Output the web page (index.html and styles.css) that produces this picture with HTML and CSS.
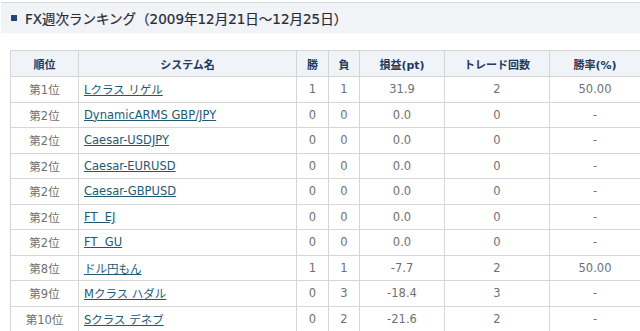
FILE: index.html
```html
<!DOCTYPE html>
<html lang="ja">
<head>
<meta charset="utf-8">
<link rel="stylesheet" href="styles.css">
</head>
<body>
<div class="page">
  <h2 class="title"><span class="sq"></span>FX週次ランキング（2009年12月21日～12月25日）</h2>
  <table class="rank">
    <colgroup>
      <col class="c1"><col class="c2"><col class="c3"><col class="c4"><col class="c5"><col class="c6"><col class="c7">
    </colgroup>
    <thead>
      <tr><th>順位</th><th>システム名</th><th>勝</th><th>負</th><th>損益(pt)</th><th>トレード回数</th><th>勝率(%)</th></tr>
    </thead>
    <tbody>
      <tr><td>第1位</td><td class="name"><a href="#">Lクラス リゲル</a></td><td>1</td><td>1</td><td>31.9</td><td>2</td><td>50.00</td></tr>
      <tr><td>第2位</td><td class="name"><a href="#">DynamicARMS GBP/JPY</a></td><td>0</td><td>0</td><td>0.0</td><td>0</td><td>-</td></tr>
      <tr><td>第2位</td><td class="name"><a href="#">Caesar-USDJPY</a></td><td>0</td><td>0</td><td>0.0</td><td>0</td><td>-</td></tr>
      <tr><td>第2位</td><td class="name"><a href="#">Caesar-EURUSD</a></td><td>0</td><td>0</td><td>0.0</td><td>0</td><td>-</td></tr>
      <tr><td>第2位</td><td class="name"><a href="#">Caesar-GBPUSD</a></td><td>0</td><td>0</td><td>0.0</td><td>0</td><td>-</td></tr>
      <tr><td>第2位</td><td class="name"><a href="#">FT&nbsp; EJ</a></td><td>0</td><td>0</td><td>0.0</td><td>0</td><td>-</td></tr>
      <tr><td>第2位</td><td class="name"><a href="#">FT&nbsp; GU</a></td><td>0</td><td>0</td><td>0.0</td><td>0</td><td>-</td></tr>
      <tr><td>第8位</td><td class="name"><a href="#">ドル円もん</a></td><td>1</td><td>1</td><td>-7.7</td><td>2</td><td>50.00</td></tr>
      <tr><td>第9位</td><td class="name"><a href="#">Mクラス ハダル</a></td><td>0</td><td>3</td><td>-18.4</td><td>3</td><td>-</td></tr>
      <tr><td>第10位</td><td class="name"><a href="#">Sクラス デネブ</a></td><td>0</td><td>2</td><td>-21.6</td><td>2</td><td>-</td></tr>
    </tbody>
  </table>
</div>
</body>
</html>
```
FILE: styles.css
```css
html, body {
  margin: 0;
  padding: 0;
  background: #ffffff;
}
body {
  font-family: "DejaVu Sans", "Noto Sans CJK JP", sans-serif;
  color: #666666;
  font-size: 12px;
}
.page {
  width: 640px;
  height: 331px;
  overflow: hidden;
  padding-top: 2px;
  box-sizing: border-box;
}
.title {
  margin: 0 0 0 1px;
  height: 30px;
  border-top: 1px solid #d4d8de;
  background: #f1f3f7;
  display: flex;
  align-items: center;
  padding-left: 10px;
  font-size: 13.5px;
  font-weight: normal;
  color: #262c38;
  -webkit-text-stroke: 0.2px #262c38;
}
.sq {
  width: 6px;
  height: 6px;
  background: #23467a;
  margin-right: 8px;
  flex: none;
}
.rank {
  margin: 17px 0 0 10px;
  border-collapse: collapse;
  table-layout: fixed;
  width: 630px;
}
.c1 { width: 68px; }
.c2 { width: 218px; }
.c3 { width: 32px; }
.c4 { width: 31px; }
.c5 { width: 85px; }
.c6 { width: 105px; }
.c7 { width: 91px; }
.rank th, .rank td {
  border: 1px solid #d6d6d6;
  text-align: center;
  padding: 0;
  white-space: nowrap;
  overflow: hidden;
}
.rank th {
  height: 25px;
  background: #f0f3f8;
  color: #23395e;
  font-weight: bold;
  font-size: 11px;
}
.rank td {
  height: 24.5px;
  color: #707070;
  font-size: 11.5px;
}
.rank td.name {
  text-align: left;
  padding-left: 5px;
}
.rank td.name a {
  color: #1e5a74;
  text-decoration: underline;
}
```
